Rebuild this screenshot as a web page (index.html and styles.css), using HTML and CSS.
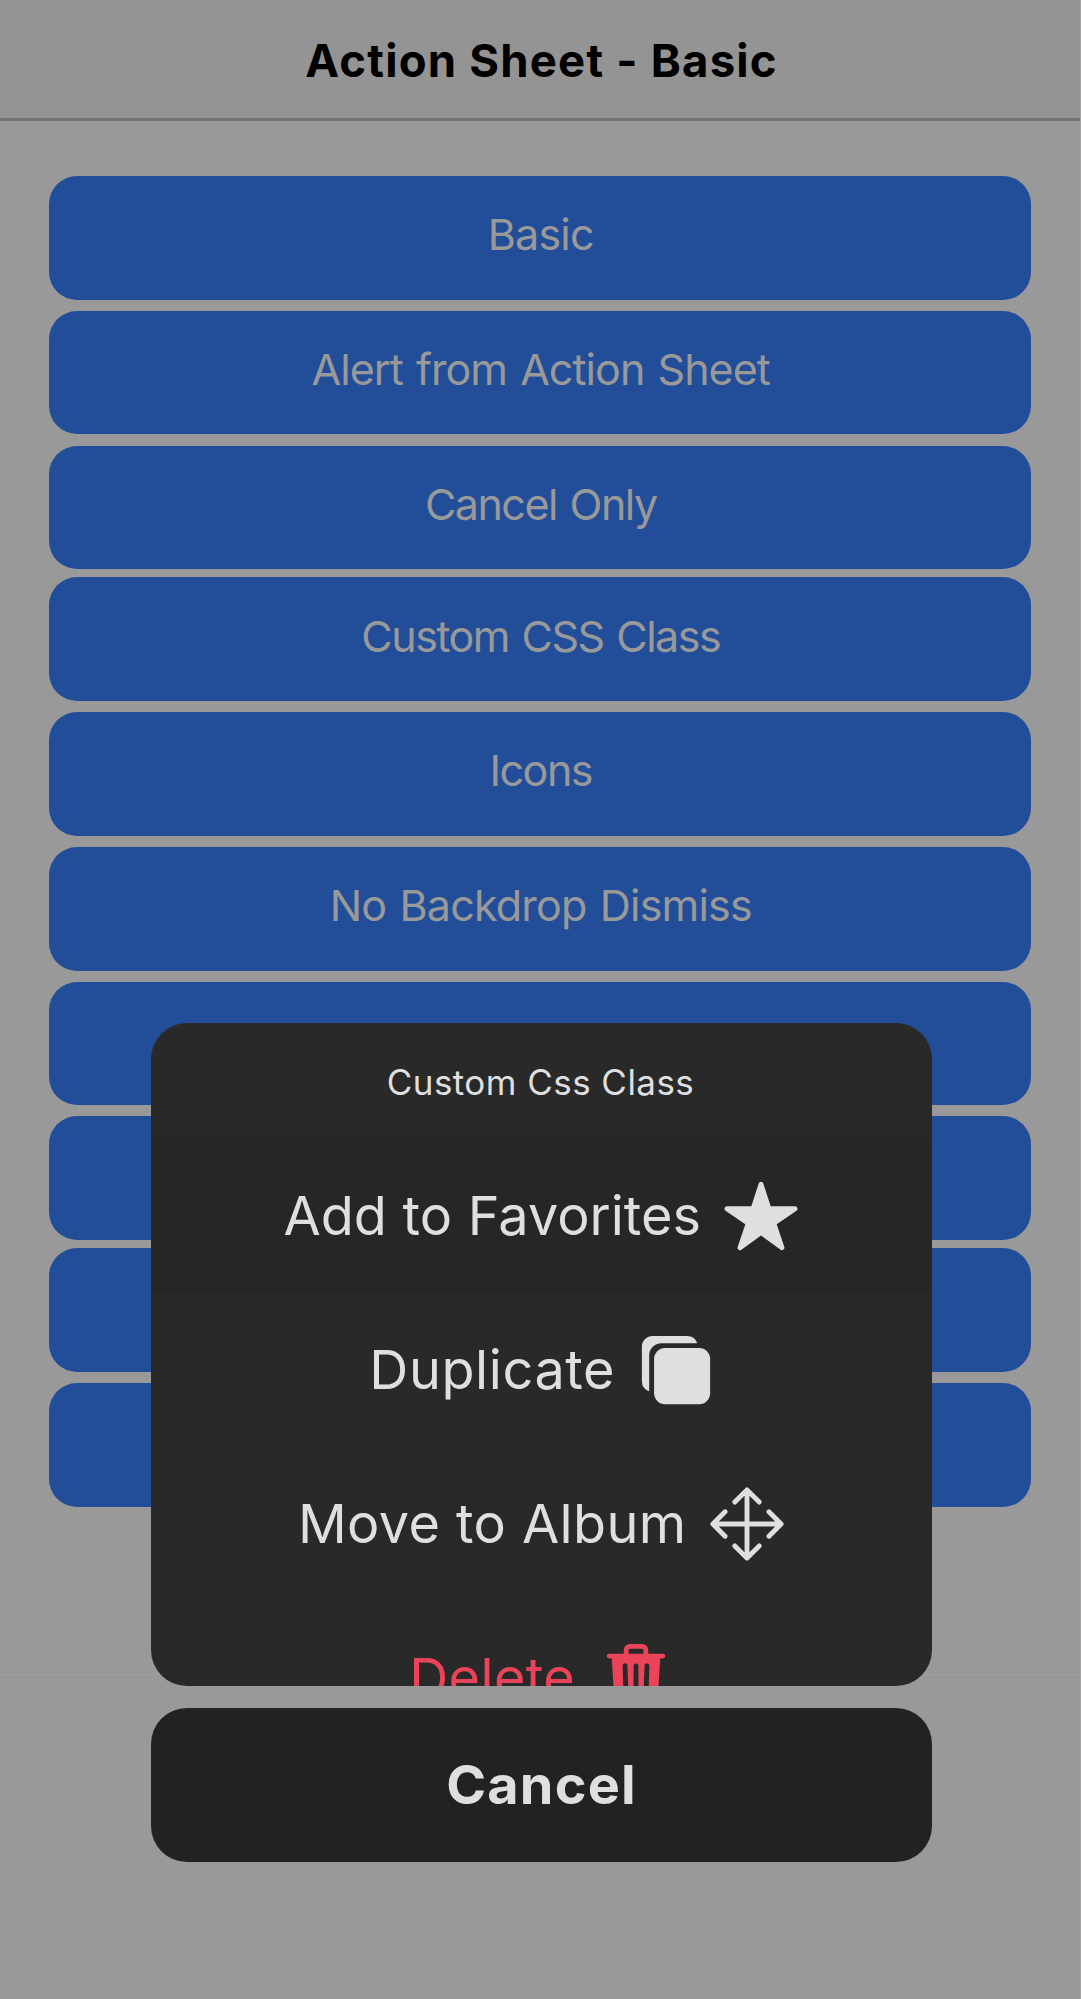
FILE: index.html
```html
<!DOCTYPE html>
<html lang="en">
<head>
<meta charset="utf-8">
<title>Action Sheet - Basic</title>
<link rel="stylesheet" href="styles.css">
</head>
<body>
<div class="page">
  <header class="toolbar"><h1 class="toolbar-title">Action Sheet - Basic</h1></header>
  <main class="content">
    <button class="button">Basic</button>
    <button class="button track-snug">Alert from Action Sheet</button>
    <button class="button track-narrow">Cancel Only</button>
    <button class="button button-tight track-narrow">Custom CSS Class</button>
    <button class="button track-narrow">Icons</button>
    <button class="button">No Backdrop Dismiss</button>
    <button class="button"></button>
    <button class="button"></button>
    <button class="button button-tight"></button>
    <button class="button"></button>
  </main>
  <footer class="footer"></footer>

  <div class="sheet" role="dialog">
    <div class="sheet-group">
      <div class="sheet-title"><span>Custom Css Class</span></div>
      <button class="sheet-button selected"><span>Add to Favorites</span>
        <svg class="icon" viewBox="0 0 512 512"><path d="M394 480a16 16 0 01-9.39-3L256 383.76 127.39 477a16 16 0 01-24.55-18.08L153 310.35 23 221.2a16 16 0 019-29.2h160.38l48.4-148.95a16 16 0 0130.44 0l48.4 149H480a16 16 0 019.05 29.2L359 310.35l50.13 148.53A16 16 0 01394 480z"/></svg>
      </button>
      <button class="sheet-button duplicate"><span>Duplicate</span>
        <svg class="icon" viewBox="0 0 512 512"><path d="M408 480H184a72 72 0 01-72-72V184a72 72 0 0172-72h224a72 72 0 0172 72v224a72 72 0 01-72 72z"/><path d="M160 80h235.88A72.12 72.12 0 00328 32H104a72 72 0 00-72 72v224a72.12 72.12 0 0048 67.88V160a80 80 0 0180-80z"/></svg>
      </button>
      <button class="sheet-button"><span>Move to Album</span>
        <svg class="icon icon-line" viewBox="0 0 512 512"><path d="M176 112l80-80 80 80M256 32v448M176 400l80 80 80-80M400 176l80 80-80 80M112 176l-80 80 80 80M32 256h448"/></svg>
      </button>
      <button class="sheet-button destructive"><span>Delete</span>
        <svg class="icon" viewBox="0 0 512 512"><path d="M432 96h-96V72a40 40 0 00-40-40h-80a40 40 0 00-40 40v24H80a16 16 0 000 32h17l19 304.92c1.42 26.85 22 47.08 48 47.08h184c26.13 0 46.3-19.78 48-47l19-305h17a16 16 0 000-32zM192.57 416H192a16 16 0 01-16-15.43l-8-224a16 16 0 1132-1.14l8 224A16 16 0 01192.57 416zM272 400a16 16 0 01-32 0V176a16 16 0 0132 0zm32-304h-96V72a7.91 7.91 0 018-8h80a7.91 7.91 0 018 8zm32 304.57A16 16 0 01320 416h-.58A16 16 0 01304 399.43l8-224a16 16 0 1132 1.14z"/></svg>
      </button>
    </div>
    <button class="sheet-cancel">Cancel</button>
  </div>
</div>
</body>
</html>
```
FILE: styles.css
```css
* {
  box-sizing: border-box;
}

body {
  margin: 0;
  background: #999;
  font-family: Inter, "Liberation Sans", sans-serif;
}

button {
  margin: 0;
  border: 0;
  font-family: inherit;
}

.page {
  position: relative;
  display: flex;
  flex-direction: column;
  width: 1081px;
  height: 1999px;
  overflow: hidden;
  border-right: 1px solid #a5a5a5;
}

.toolbar {
  display: flex;
  align-items: center;
  justify-content: center;
  height: 121px;
  padding: 3px 0 0 3px;
  border-bottom: 3px solid #757575;
  background: #949494;
}

.toolbar-title {
  margin: 0;
  color: #000;
  font-size: 45.5px;
  font-weight: 700;
  letter-spacing: 1.2px;
}

.content {
  display: flex;
  flex: 1;
  flex-direction: column;
  gap: 11.2px;
  padding: 55px 49px 0;
}

.button {
  flex: none;
  height: 123.6px;
  padding: 0 0 7px 1.5px;
  border-radius: 28px;
  background: #224e99;
  color: #999;
  font-size: 43px;
  letter-spacing: -0.8px;
  word-spacing: 2px;
}

.button-tight {
  margin-top: -3px;
}

.track-snug {
  letter-spacing: -0.95px;
}

.track-narrow {
  letter-spacing: -1.5px;
}

.footer {
  height: 325px;
  border-top: 1px solid #9f9f9f;
}

.sheet {
  position: absolute;
  top: 1023px;
  left: 151px;
  display: flex;
  flex-direction: column;
  gap: 22px;
  width: 781px;
  color: #dfdfdf;
}

.sheet-group {
  height: 663px;
  overflow: hidden;
  border-radius: 36px;
  background: #292929;
}

.sheet-title {
  display: flex;
  align-items: center;
  justify-content: center;
  height: 114px;
  padding: 4px 2px 0 0;
  font-size: 35px;
  letter-spacing: 0.45px;
}

.sheet-button {
  display: flex;
  align-items: center;
  justify-content: center;
  gap: 21.5px;
  width: 100%;
  height: 154px;
  padding: 2px 0 0 1px;
  border-bottom: 1px solid #252525;
  background: transparent;
  color: inherit;
  font-size: 54px;
  letter-spacing: 0.4px;
}

.sheet-button.selected {
  height: 155px;
  padding-top: 3px;
  background: #262626;
  border-bottom-color: #222;
  letter-spacing: 0;
  word-spacing: 0.5px;
}

.sheet-button.duplicate {
  letter-spacing: 0.6px;
}

.sheet-button.destructive {
  color: #eb445a;
}

.icon {
  width: 78px;
  height: 78px;
  fill: currentColor;
}

.icon-line {
  fill: none;
  stroke: currentColor;
  stroke-width: 32;
  stroke-linecap: round;
  stroke-linejoin: round;
}

.sheet-cancel {
  height: 154px;
  padding: 0 0 2px;
  border-radius: 36px;
  background: #222;
  color: inherit;
  font-size: 54px;
  font-weight: 700;
  letter-spacing: 1.2px;
}
```
